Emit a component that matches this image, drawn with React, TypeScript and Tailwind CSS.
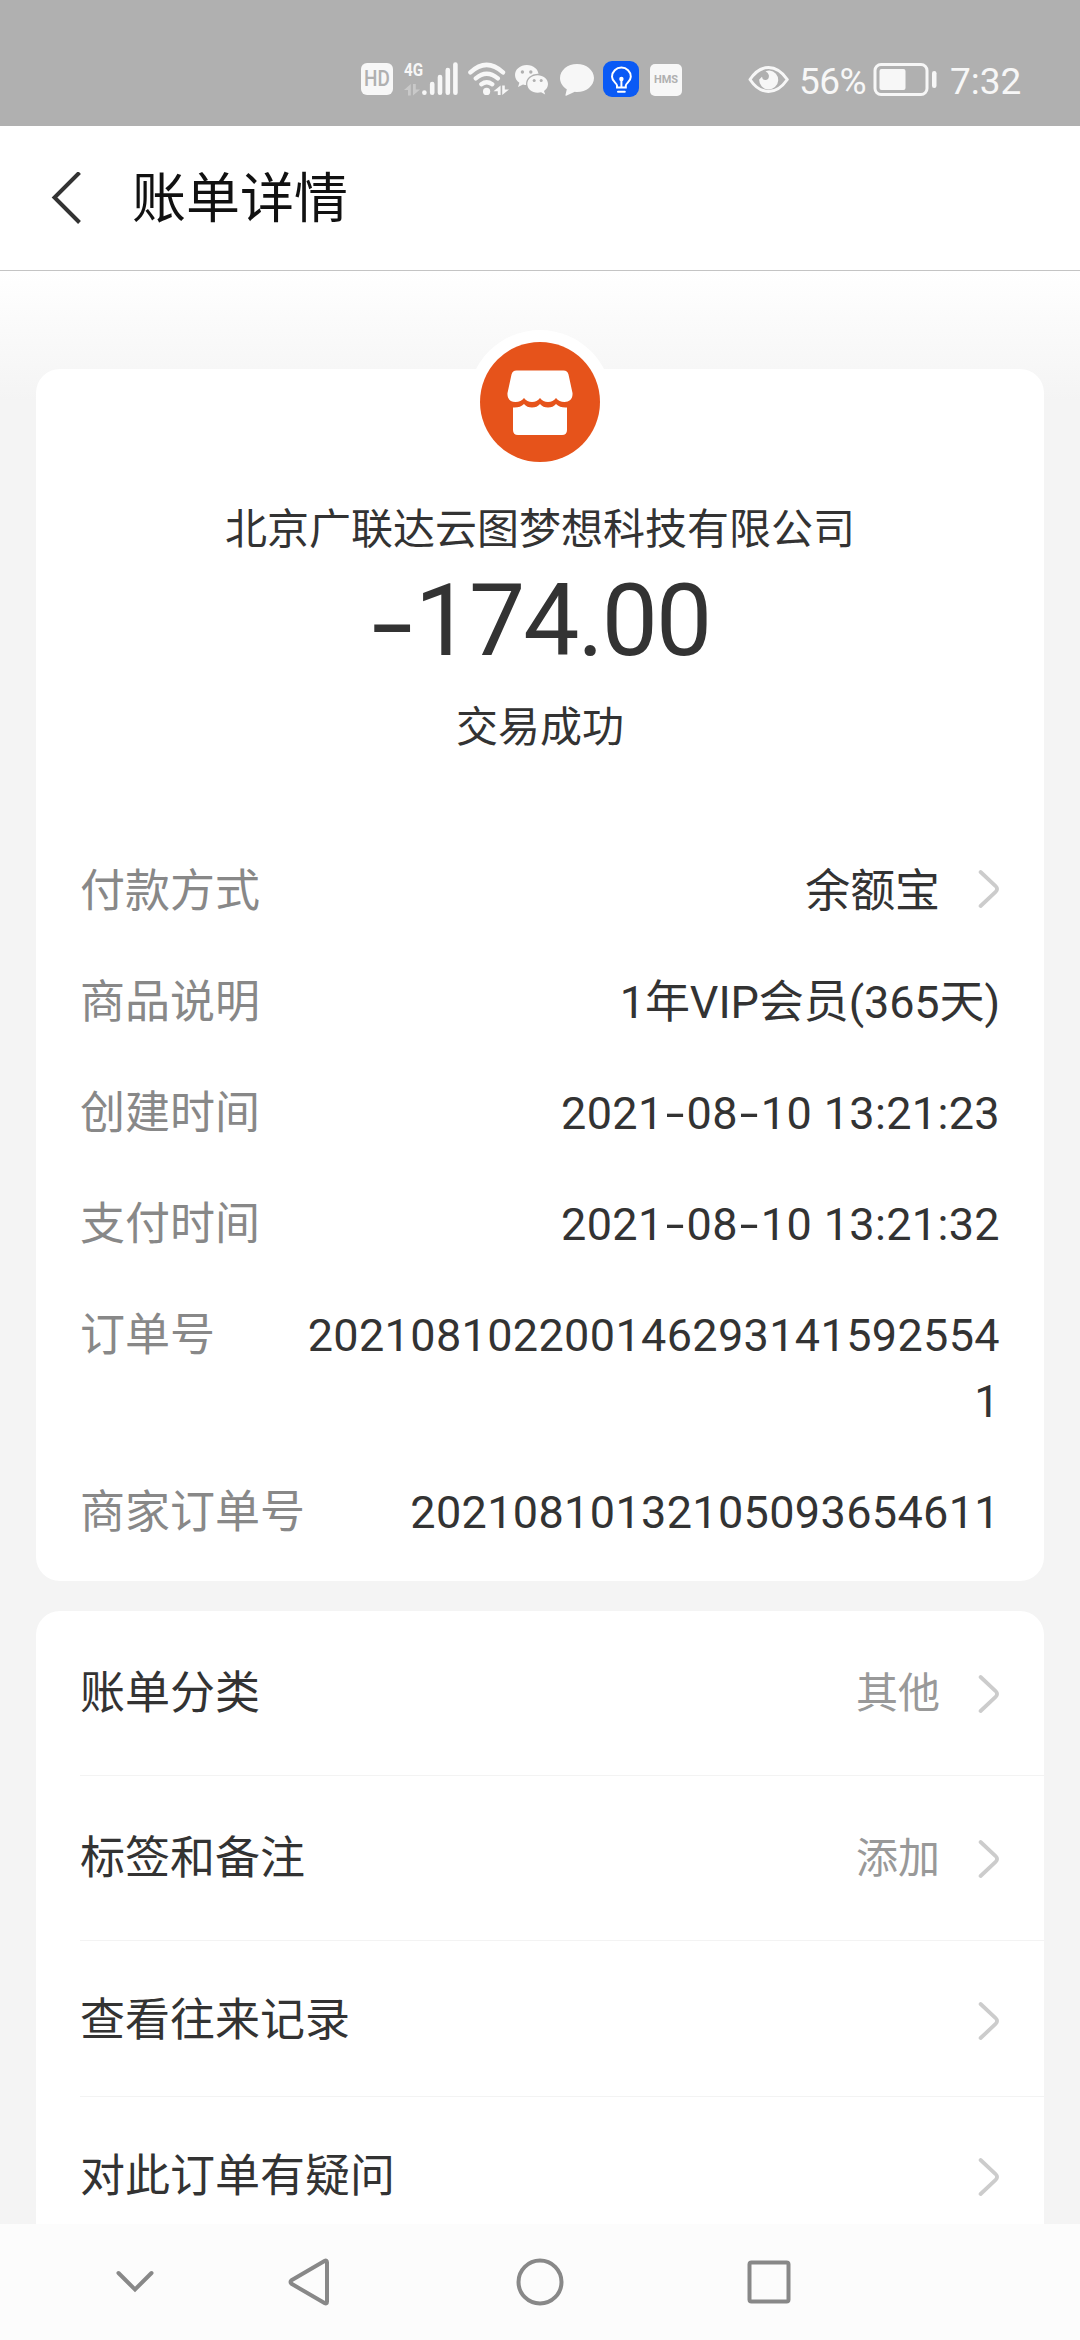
import type { ReactNode } from "react";

type Detail = { label: string; value: string; link?: boolean };
type Entry = { label: string; value?: string };

const details: Detail[] = [
  { label: "付款方式", value: "余额宝", link: true },
  { label: "商品说明", value: "1年VIP会员(365天)" },
  { label: "创建时间", value: "2021-08-10 13:21:23" },
  { label: "支付时间", value: "2021-08-10 13:21:32" },
  { label: "订单号", value: "2021081022001462931415925541" },
  { label: "商家订单号", value: "20210810132105093654611" },
];

const entries: Entry[] = [
  { label: "账单分类", value: "其他" },
  { label: "标签和备注", value: "添加" },
  { label: "查看往来记录" },
  { label: "对此订单有疑问" },
];

const Chevron = () => (
  <svg className="ml-[38px] h-10 w-[22px] shrink-0" viewBox="0 0 22 40" fill="none">
    <path
      d="M2.6 3 L17.6 17 Q20.6 20 17.6 23 L2.6 37"
      stroke="#cccccc"
      strokeWidth="3.8"
      strokeLinecap="round"
    />
  </svg>
);

// the hyphen is drawn wider than the one in Roboto
const Dash = () => (
  <span className="inline-block w-[23px] text-center">
    <span className="inline-block scale-x-150">-</span>
  </span>
);

const withDashes = (text: string): ReactNode[] =>
  text.split("-").flatMap((part, i) => (i === 0 ? [part] : [<Dash key={i} />, part]));

const isNumeric = (text: string) => /^[\d\-: ]+$/.test(text);

const StatusBar = () => (
  <header className="flex h-[126px] shrink-0 items-start bg-[#b0b0b0] pt-[60px] pl-[361px] text-[#f7f7f7]">
    <div className="mt-[3px] flex h-8 w-8 items-center justify-center rounded-[6px] bg-[#f7f7f7] text-[22px] font-medium text-[#b0b0b0]">
      <span className="inline-block scale-x-[0.86] leading-none">HD</span>
    </div>

    <div className="ml-[11px] flex h-9 w-[54px]">
      <div className="flex w-[18px] flex-col">
        <span className="mt-[1px] h-[17px] origin-left scale-x-[0.8] text-[19px] leading-[17px] font-bold">4G</span>
        <svg className="mt-[6px] h-3 w-4" viewBox="0 0 16 12" fill="#c9c9c9">
          <path d="M6.8 0V11.5H4V6H0ZM9 0H11.8V5.5H16L9 11.5Z" />
        </svg>
      </div>
      <svg className="h-9 w-9" viewBox="0 0 36 36" stroke="currentColor" strokeWidth="4.6" strokeLinecap="round">
        <path d="M2.4 32.6V32.7M10.2 24V32.7M18 17V32.7M25.8 10V32.7M33.4 4.5V32.7" />
      </svg>
    </div>

    <svg className="ml-[9px] h-9 w-[43px]" viewBox="0 0 43 36" fill="none" stroke="currentColor" strokeWidth="4.4" strokeLinecap="round">
      <path d="M3.4 12.4Q19.5-2.6 36 12.4M8.8 18.4Q19.7 9.2 30.8 18.4M14.4 24.2Q19.7 20.2 25.2 24.2" />
      <circle cx="19.6" cy="31.4" r="3.6" fill="currentColor" stroke="none" />
      <path d="M33.6 25.5V35H30.8V31.2H26.5ZM35.2 25.5H37.8V29.5H42L35.2 35Z" fill="currentColor" stroke="none" />
    </svg>

    <svg className="ml-[5px] h-9 w-[34px]" viewBox="0 0 34 36">
      <path d="M11.8 5C5.2 5 0 9.4 0 15C0 18.2 1.7 21 4.4 22.8L3 27L8 24.4C9.2 24.8 10.4 25 11.8 25C18.4 25 23.6 20.6 23.6 15S18.4 5 11.8 5Z" fill="#f7f7f7" />
      <ellipse cx="22.6" cy="24" rx="11.6" ry="10.2" fill="#b0b0b0" />
      <path d="M22.6 15.200C16.900 15.200 12.300 19.100 12.300 24S16.900 32.800 22.600 32.800C23.800 32.800 25 32.600 26.100 32.300L30.200 34.500L29 31C31.500 29.400 33 26.800 33 24C33 19.100 28.300 15.200 22.600 15.200Z" fill="#f7f7f7" />
      <g fill="#b0b0b0">
        <circle cx="7.4" cy="12" r="1.7" />
        <circle cx="15.8" cy="12" r="1.7" />
        <circle cx="19.2" cy="20.6" r="1.5" />
        <circle cx="26.2" cy="20.6" r="1.5" />
      </g>
    </svg>

    <svg className="ml-[10px] h-9 w-[35px]" viewBox="0 0 35 36" fill="currentColor">
      <path d="M18 4C8.6 4 1 10.2 1 18c0 4.6 2.6 8.6 6.8 11.2L6.4 35.3Q6.4 36 7.2 35.7L15.8 31.8Q17 32 18 32c9.4 0 17-6.2 17-14S27.4 4 18 4Z" />
    </svg>

    <svg className="mt-px ml-[9px] h-9 w-9" viewBox="0 0 36 36" fill="none" stroke="#fff" strokeWidth="2" strokeLinecap="round">
      <rect width="36" height="36" rx="9" fill="#0a5af5" stroke="none" />
      <path d="M14 26.5V24.5C13.8 22 9 20.5 9 15.8a9.4 9.2 0 0 1 18.8 0C27.8 20.5 23 22 22.8 24.5V26.5ZM15 30.8H21.8M18.4 19V26" />
      <circle cx="18.4" cy="18" r="2.2" fill="#fff" stroke="none" />
    </svg>

    <div className="mt-[4px] ml-[11px] flex h-8 w-8 items-center justify-center rounded-[5px] bg-[#f7f7f7] text-[10px] font-bold text-[#b0b0b0]">
      <span className="inline-block scale-x-110 leading-none">HMS</span>
    </div>

    <svg className="ml-[66px] h-9 w-[42px]" viewBox="0 0 42 36">
      <path d="M2 19.5Q10 7.5 20.5 7.5T39.3 19.5Q31 31.5 20.5 31.5T2 19.5Z" fill="none" stroke="#f7f7f7" strokeWidth="3" strokeLinejoin="round" />
      <path d="M21.5 10.5A9.5 9.5 0 1 1 11.2 19.5 L14 16.8Q14.5 20.5 18 20 21.5 19 20.8 15 20 12 17.5 11.4 19.5 10.5 21.5 10.5Z" fill="#f7f7f7" />
    </svg>

    <span className="mt-1 ml-[9px] w-[68px] text-[37px] leading-9 tracking-[-0.6px]">56%</span>

    <svg className="ml-[6px] h-9 w-16" viewBox="0 0 64 36" fill="currentColor">
      <rect x="2" y="4.5" width="52" height="30" rx="6" fill="none" stroke="currentColor" strokeWidth="3" />
      <rect x="6.5" y="9" width="26" height="21" rx="2" />
      <rect x="59" y="11" width="4.5" height="17" rx="2.2" />
    </svg>
    <span className="mt-1 ml-[13px] text-[37px] leading-9">7:32</span>
  </header>
);

const TitleBar = () => (
  <div className="flex h-[145px] shrink-0 items-center border-b border-[#c4c4c4] bg-white pl-[50px]">
    <svg className="h-[52px] w-8" viewBox="0 0 32 52" fill="none">
      <path d="M29.5 0.5L4.500 25.500L29.5 50.5" stroke="#333" strokeWidth="4" />
    </svg>
    <h1 className="mt-[3px] ml-[50px] text-[54px] leading-none text-[#111]">账单详情</h1>
  </div>
);

const ShopLogo = () => (
  <div className="-mt-[39px] size-36 rounded-full bg-white p-3">
    <svg className="size-[120px]" viewBox="0 0 120 120" fill="#fff">
      <circle cx="60" cy="60" r="60" fill="#e6531b" />
      <path d="M36.5 28.5H83.5Q87.5 28.5 88.5 32.5L92.5 51C93 57 89.5 60 84.5 60Q79 60 76 56Q73 60 68 60Q63 60 60 56Q57 60 52 60Q47 60 44 56Q41 60 35.5 60C30.5 60 27 57 27.5 51L31.5 32.5Q32.5 28.5 36.5 28.5Z" />
      <path d="M33 65.5Q40 66 44 62Q47 65.5 52 65.5T60 62Q63 65.5 68 65.5T76 62Q80 66 87 65.5V88Q87 93 82 93H38Q33 93 33 88Z" />
    </svg>
  </div>
);

const BillCard = () => (
  <section className="flex h-[1212px] shrink-0 flex-col items-center rounded-3xl bg-white">
    <ShopLogo />
    <p className="mt-[35px] text-[42px] leading-[42px]">北京广联达云图梦想科技有限公司</p>
    <p className="mt-[20px] flex h-[100px] items-center text-[100px] leading-[100px] tracking-[-2px]">
      <span className="relative top-1 mr-[3px] inline-block w-[42px] text-center">
        <span className="inline-block scale-x-150">-</span>
      </span>
      174.00
    </p>
    <p className="mt-[36px] text-[42px] leading-[42px]">交易成功</p>
    <dl className="mt-[110px] flex w-full flex-col gap-[45px] px-11 text-[45px] leading-[66px]">
      {details.map((item) => (
        <div key={item.label} className="flex justify-between">
          <dt className="shrink-0 text-[#888]">{item.label}</dt>
          <dd className="flex max-w-[700px] items-start justify-end">
            <span className={`text-right break-all ${isNumeric(item.value) ? "tracking-[0.35px]" : "tracking-[-0.1px]"}`}>
              {withDashes(item.value)}
            </span>
            {item.link && (
              <span className="flex pt-[10px]">
                <Chevron />
              </span>
            )}
          </dd>
        </div>
      ))}
    </dl>
  </section>
);

const EntryList = () => (
  <section className="mt-[30px] shrink-0 rounded-t-3xl bg-white pl-11">
    {entries.map((item, i) => (
      <div
        key={item.label}
        className={`flex items-center border-b border-[#f3f3f3] pr-11 text-[45px] ${i < 2 ? "h-[165px]" : "h-[156px] pt-[3px]"}`}
      >
        <span className="flex-1 leading-none">{item.label}</span>
        <span className="mt-0.5 text-[42px] leading-none text-[#999]">{item.value}</span>
        <span className="mt-[2px] flex">
          <Chevron />
        </span>
      </div>
    ))}
  </section>
);

const NavBar = () => (
  <nav className="flex h-[116px] shrink-0 items-center bg-[#fcfcfc] pl-[115px]">
    <svg className="h-6 w-10" viewBox="0 0 40 24" fill="none" stroke="#888" strokeWidth="4" strokeLinecap="round">
      <path d="M3.5 3L20 19.500L36.500 3" />
    </svg>
    <svg className="ml-[132px] h-[50px] w-11" viewBox="0 0 44 50" fill="none" stroke="#888" strokeWidth="4" strokeLinejoin="round">
      <path d="M40 5.500Q40 2.500 37.500 4L4.500 23.200Q2.500 25 4.500 26.800L37.500 46Q40 47.500 40 44.500Z" />
    </svg>
    <svg className="ml-[185px] size-12" viewBox="0 0 48 48" fill="none" stroke="#888" strokeWidth="4">
      <circle cx="24" cy="24" r="21.5" />
    </svg>
    <svg className="ml-[183px] size-11" viewBox="0 0 44 44" fill="none" stroke="#888" strokeWidth="4">
      <rect x="2.5" y="2.5" width="39" height="39" rx="2" />
    </svg>
  </nav>
);

export default function App() {
  return (
    <div className="flex h-[2340px] w-[1080px] flex-col overflow-hidden bg-[#f4f4f4] font-[Roboto,'Noto_Sans_CJK_SC',sans-serif] text-[#333]">
      <StatusBar />
      <TitleBar />
      <main className="flex h-[1953px] shrink-0 flex-col overflow-hidden bg-[linear-gradient(#ffffff,#f4f4f4_130px)] px-9 pt-[98px]">
        <BillCard />
        <EntryList />
      </main>
      <NavBar />
    </div>
  );
}
